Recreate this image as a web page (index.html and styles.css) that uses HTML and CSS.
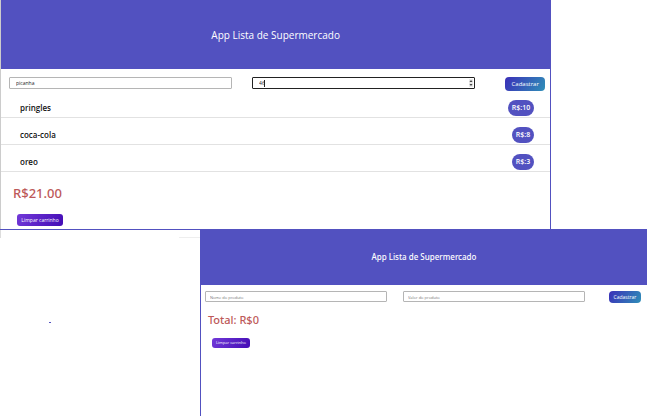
FILE: index.html
```html
<!DOCTYPE html>
<html lang="pt-BR">
<head>
<meta charset="utf-8">
<title>App Lista de Supermercado</title>
<link rel="stylesheet" href="styles.css">
</head>
<body>
<main class="board">
  <section class="app app-filled">
    <header class="banner"><h1>App Lista de Supermercado</h1></header>
    <form class="entry">
      <input class="field" type="text" aria-label="Nome do produto" value="picanha">
      <div class="amount">
        <input class="field field-active" type="text" inputmode="numeric" aria-label="Valor do produto" value="46">
        <span class="caret"></span>
        <svg class="spinner" viewBox="0 0 4 8" aria-hidden="true"><path d="M0 0h4v8H0z" fill="#e8e8e8"/><path d="M0.5 3 2 1 3.500 3zM0.500 5 2 7 3.500 5z" fill="#444"/></svg>
      </div>
      <button class="add" type="button">Cadastrar</button>
    </form>
    <ul class="items">
      <li><span>pringles</span><span class="price">R$:10</span></li>
      <li><span>coca-cola</span><span class="price">R$:8</span></li>
      <li><span>oreo</span><span class="price">R$:3</span></li>
    </ul>
    <p class="total">R$21.00</p>
    <button class="clear" type="button">Limpar carrinho</button>
  </section>
  <div class="lower">
    <div class="margin"><span class="edge"></span><span class="dash"></span></div>
    <section class="app app-empty">
      <header class="banner"><h1>App Lista de Supermercado</h1></header>
      <form class="entry">
        <input class="field" type="text" aria-label="Nome do produto" placeholder="Nome do produto">
        <input class="field" type="text" aria-label="Valor do produto" placeholder="Valor do produto">
        <button class="add" type="button">Cadastrar</button>
      </form>
      <p class="total">Total: R$0</p>
      <button class="clear" type="button">Limpar carrinho</button>
    </section>
  </div>
</main>
</body>
</html>
```
FILE: styles.css
```css
* { box-sizing: border-box; }
body {
  margin: 0;
  background: #fff;
  color: #111;
  font-family: "Open Sans", "Noto Sans", sans-serif;
}
.board {
  display: flex;
  flex-direction: column;
  min-height: 100vh;
}
h1, p, ul { margin: 0; padding: 0; }
h1 { font-weight: 500; }
button {
  display: block;
  border: 0;
  padding: 0;
  color: #fff;
  font-family: inherit;
  white-space: nowrap;
}
.app-filled {
  width: 85.2%;
  padding-bottom: 3px;
  border-left: 1px solid #ccc;
  border-right: 1px solid #5251c0;
}
.banner {
  display: flex;
  align-items: center;
  justify-content: center;
  height: 69px;
  background: #5251c0;
  color: #fff;
}
.banner h1 { font-size: 10px; line-height: 14px; }
.entry {
  display: grid;
  column-gap: 20px;
  align-items: start;
  padding: 8px 5px 0 8px;
}
.app-filled .entry { grid-template-columns: 1fr 1fr 50px; }
.field {
  display: block;
  width: 100%;
  height: 12px;
  padding: 0 6px;
  border: 1px solid #b5b5b5;
  border-radius: 1px;
  background: #fff;
  color: #222;
  font-family: inherit;
  font-size: 5px;
  outline: 0;
}
.field::placeholder { color: #777; opacity: 1; }
.field-active { border-color: #222; }
.amount { position: relative; }
.caret {
  position: absolute;
  top: 3px;
  left: 12px;
  width: 1px;
  height: 7px;
  background: #222;
}
.spinner {
  position: absolute;
  top: 2px;
  right: 2px;
  width: 4px;
  height: 8px;
}
.add {
  justify-self: end;
  width: 40px;
  height: 14px;
  border-radius: 4px;
  background: linear-gradient(120deg, #3b2fb8, #2f8fb8);
  font-size: 6px;
  line-height: 14px;
}
.items { list-style: none; }
.items li {
  display: flex;
  align-items: flex-end;
  justify-content: space-between;
  height: 27px;
  padding: 0 16px 1px 19px;
  border-bottom: 1px solid #e2e2e2;
  font-size: 8px;
  font-weight: 600;
  line-height: 16px;
}
.price {
  padding: 0 4px;
  border-radius: 8px;
  background: #5251c0;
  color: #fff;
  font-size: 7px;
}
.total {
  color: #bd5959;
  font-family: "Noto Sans", "Open Sans", sans-serif;
  font-weight: 500;
}
.app-filled .total {
  margin: 12px 0 11px 12px;
  font-size: 13px;
  line-height: 19px;
}
.clear {
  border-radius: 3px;
  background: linear-gradient(120deg, #7239d8, #430cb5);
}
.app-filled .clear {
  width: 46px;
  height: 12px;
  margin-left: 16px;
  font-size: 5px;
  line-height: 12px;
}
.lower {
  display: grid;
  grid-template-columns: 30.9% 1fr;
  flex: 1;
}
.margin {
  position: relative;
  border-top: 1px solid #5251c0;
}
.edge {
  display: block;
  width: 1px;
  height: 8px;
  background: #ddd;
}
.margin::after {
  content: "";
  position: absolute;
  top: 7px;
  right: 0;
  width: 21px;
  height: 1px;
  background: #eee;
}
.dash {
  position: absolute;
  top: 92px;
  left: 49px;
  width: 2px;
  height: 1px;
  background: #5251c0;
}
.app-empty { border-left: 1px solid #5251c0; }
.app-empty .banner { height: 56px; }
.app-empty .banner h1 {
  font-family: "Noto Sans", "Open Sans", sans-serif;
  font-size: 8px;
}
.app-empty .entry {
  grid-template-columns: 1fr 1fr 40px;
  column-gap: 16px;
  padding: 6px 6px 0 4px;
}
.app-empty .field {
  height: 11px;
  padding: 0 4px;
}
.app-empty .field::placeholder { font-size: 4px; }
.app-empty .add {
  width: 32px;
  height: 12px;
  font-size: 5px;
  line-height: 12px;
}
.app-empty .total {
  margin: 9px 0 10px 7px;
  font-size: 11px;
  line-height: 16px;
}
.app-empty .clear {
  width: 38px;
  height: 10px;
  margin-left: 11px;
  font-size: 4px;
  line-height: 10px;
}
```
